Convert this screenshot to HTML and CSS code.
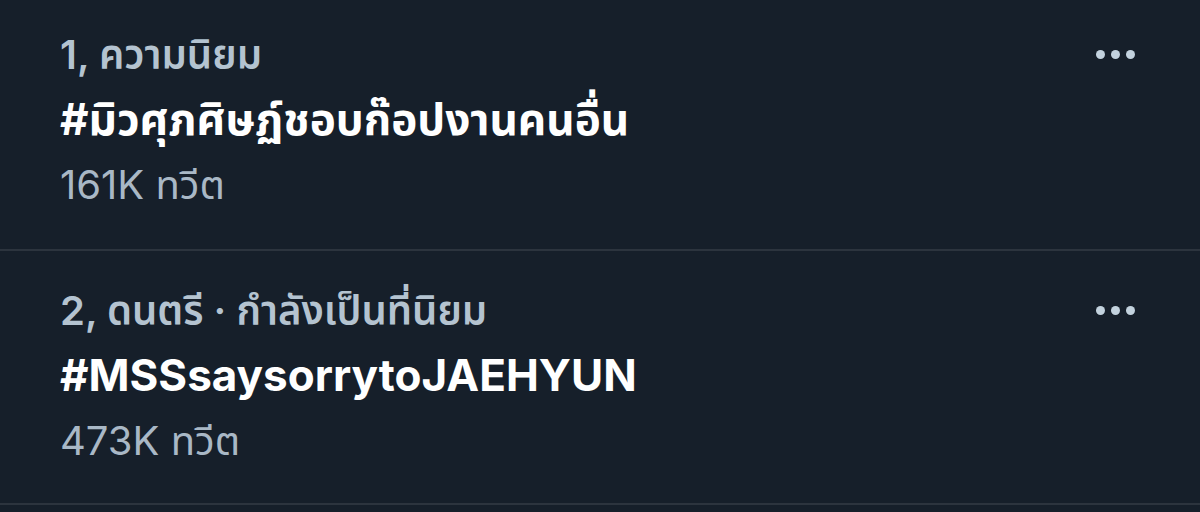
FILE: index.html
```html
<!DOCTYPE html>
<html lang="th">
<head>
<meta charset="utf-8">
<link rel="stylesheet" href="styles.css">
</head>
<body>
<ul class="trends">
  <li class="trend">
    <div class="trend-body">
      <div class="meta">1, ความนิยม</div>
      <div class="title">#มิวศุภศิษฏ์ชอบก๊อปงานคนอื่น</div>
      <div class="count">161K ทวีต</div>
    </div>
    <button class="more" aria-label="more"><span></span><span></span><span></span></button>
  </li>
  <li class="trend">
    <div class="trend-body">
      <div class="meta">2, ดนตรี · กำลังเป็นที่นิยม</div>
      <div class="title">#MSSsaysorrytoJAEHYUN</div>
      <div class="count">473K ทวีต</div>
    </div>
    <button class="more" aria-label="more"><span></span><span></span><span></span></button>
  </li>
</ul>
</body>
</html>
```
FILE: styles.css
```css
html, body {
  margin: 0;
  padding: 0;
  background: #161f2a;
}
body {
  font-family: Inter, "Noto Sans Thai", "Noto Sans", sans-serif;
  width: 1200px;
  height: 512px;
  overflow: hidden;
}
.trends {
  list-style: none;
  margin: 0;
  padding: 0;
}
.trend {
  display: flex;
  justify-content: space-between;
  align-items: flex-start;
  height: 251px;
  box-sizing: border-box;
  padding: 22px 0 0 60px;
  border-bottom: 2px solid #2c343e;
}
.trend + .trend {
  height: 254px;
  padding-top: 27px;
}
.trend-body {
  display: flex;
  flex-direction: column;
}
.meta {
  color: #b4c3d0;
  font-size: 40px;
  font-weight: 600;
  line-height: 65px;
}
.title {
  color: #ffffff;
  font-size: 44px;
  font-weight: 700;
  line-height: 65px;
}
.count {
  color: #a9b8c6;
  font-size: 40px;
  line-height: 65px;
}
.more {
  display: flex;
  gap: 6px;
  background: none;
  border: 0;
  padding: 0;
  margin: 28px 65px 0 0;
}
.more span {
  width: 9px;
  height: 9px;
  border-radius: 50%;
  background: #c3d2de;
}
```
